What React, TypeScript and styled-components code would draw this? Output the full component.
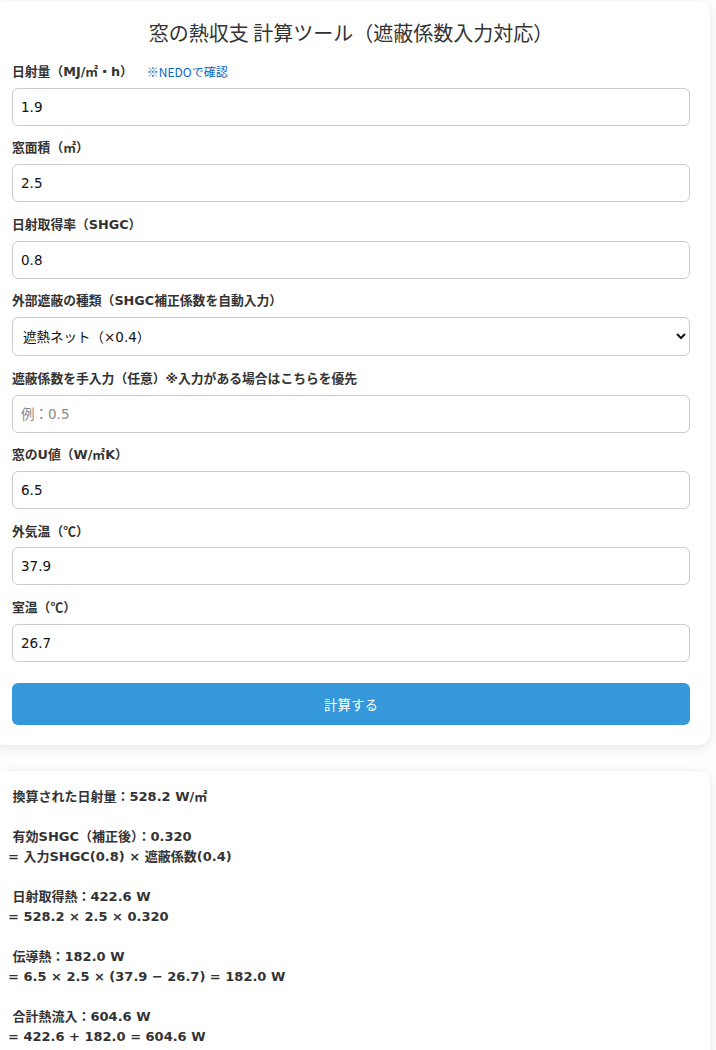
import React from "react";
import styled, { createGlobalStyle } from "styled-components";

const Global = createGlobalStyle`
  html, body { margin: 0; padding: 0; background: #fdfdfd; }
  body {
    font-family: "DejaVu Sans", "Noto Sans CJK JP", sans-serif;
    color: #333;
    overflow: hidden;
  }
  * { box-sizing: border-box; }
`;

const Page = styled.div`
  padding-top: 1px;
  display: flex;
  flex-direction: column;
  gap: 26px;
`;

const Card = styled.div`
  margin: 0 6px 0 -8px;
  background: #fff;
  border-radius: 12px;
  box-shadow: 0 3px 12px rgba(0, 0, 0, 0.09);
  padding: 20px;
`;

const Title = styled.h2`
  margin: 0 0 18px;
  font-family: "Noto Sans CJK JP", sans-serif;
  font-size: 20px;
  font-weight: 400;
  line-height: 24px;
  text-align: center;
  color: #333;
`;

const Field = styled.div`
  display: flex;
  flex-direction: column;
  margin-bottom: 13.4px;
`;

const Label = styled.label`
  display: flex;
  align-items: center;
  gap: 14px;
  height: 18px;
  font-size: 12.8px;
  font-weight: 700;
  line-height: 18px;
  color: #333;
  margin-bottom: 7px;
`;

const Cjk = styled.span`
  font-family: "Noto Sans CJK JP", sans-serif;
`;

const Link = styled.a`
  font-size: 12px;
  font-weight: 400;
  color: #0a66c2;
  text-decoration: none;
  font-family: "Noto Sans CJK JP", sans-serif;
`;

const Input = styled.input`
  height: 38px;
  width: 100%;
  padding: 0 8px;
  border: 1px solid #ccc;
  border-radius: 6px;
  font-family: "DejaVu Sans", "Noto Sans CJK JP", sans-serif;
  font-size: 13.5px;
  color: #111;
  background: #fff;
  &::placeholder { color: #888; }
`;

const Select = styled.select`
  height: 39px;
  width: 100%;
  padding: 0 6px;
  border: 1px solid #ccc;
  border-radius: 6px;
  font-family: "DejaVu Sans", "Noto Sans CJK JP", sans-serif;
  font-size: 13.5px;
  color: #111;
  background: #fff;
`;

const Button = styled.button`
  display: block;
  width: 100%;
  height: 42px;
  margin-top: 21px;
  border: none;
  border-radius: 6px;
  background: #3498db;
  color: #fff;
  font-family: "Noto Sans CJK JP", sans-serif;
  font-size: 13.5px;
`;

const ResultCard = styled(Card)`
  padding: 16px;
`;

const Result = styled.div`
  white-space: pre-wrap;
  font-size: 13px;
  font-weight: 700;
  line-height: 20px;
  color: #333;
`;

type F = { label: React.ReactNode; key: string; value?: string; placeholder?: string; link?: string };

const fields: F[] = [
  { key: "a", label: "日射量（MJ/㎡・h）", value: "1.9", link: "※NEDOで確認" },
  { key: "b", label: "窓面積（㎡）", value: "2.5" },
  { key: "c", label: "日射取得率（SHGC）", value: "0.8" },
];

const fields2: F[] = [
  { key: "d", label: "遮蔽係数を手入力（任意）※入力がある場合はこちらを優先", placeholder: "例：0.5" },
  { key: "e", label: "窓のU値（W/㎡K）", value: "6.5" },
  { key: "f", label: <>外気温（<Cjk>℃</Cjk>）</>, value: "37.9" },
  { key: "g", label: <>室温（<Cjk>℃</Cjk>）</>, value: "26.7" },
];

const resultText =
  " 換算された日射量：528.2 W/㎡\n\n" +
  " 有効SHGC（補正後）：0.320\n" +
  "= 入力SHGC(0.8) × 遮蔽係数(0.4)\n\n" +
  " 日射取得熱：422.6 W\n" +
  "= 528.2 × 2.5 × 0.320\n\n" +
  " 伝導熱：182.0 W\n" +
  "= 6.5 × 2.5 × (37.9 − 26.7) = 182.0 W\n\n" +
  " 合計熱流入：604.6 W\n" +
  "= 422.6 + 182.0 = 604.6 W";

export default function App() {
  return (
    <>
      <Global />
      <Page>
        <Card>
          <Title>窓の熱収支 計算ツール（遮蔽係数入力対応）</Title>
          {fields.map((f) => (
            <Field key={f.key}>
              <Label>
                <span>{f.label}</span>
                {f.link && <Link href="#">{f.link}</Link>}
              </Label>
              <Input defaultValue={f.value} placeholder={f.placeholder} />
            </Field>
          ))}
          <Field>
            <Label>外部遮蔽の種類（SHGC補正係数を自動入力）</Label>
            <Select defaultValue="0.4">
              <option value="1">なし（×1.0）</option>
              <option value="0.4">遮熱ネット（×0.4）</option>
            </Select>
          </Field>
          {fields2.map((f) => (
            <Field key={f.key}>
              <Label>
                <span>{f.label}</span>
              </Label>
              <Input defaultValue={f.value} placeholder={f.placeholder} />
            </Field>
          ))}
          <Button>計算する</Button>
        </Card>
        <ResultCard>
          <Result>{resultText}</Result>
        </ResultCard>
      </Page>
    </>
  );
}
